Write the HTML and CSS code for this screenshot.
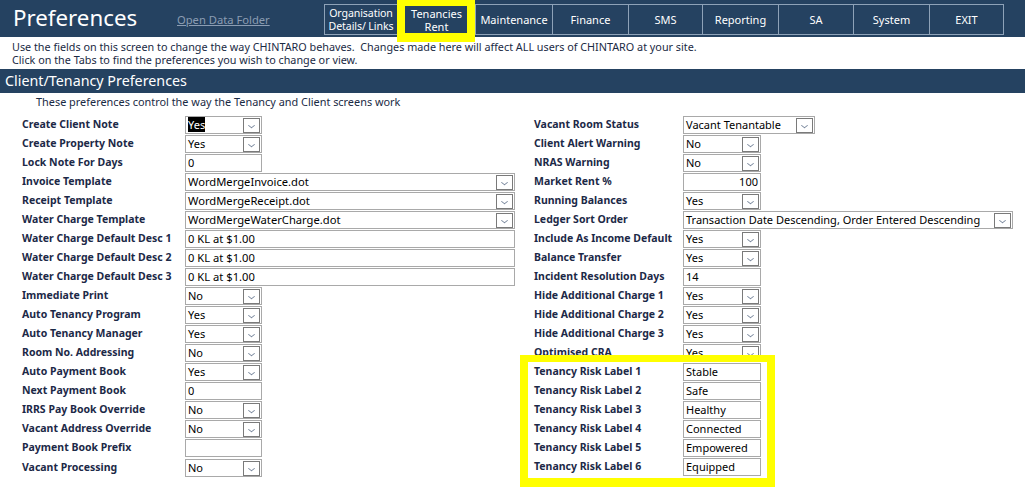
FILE: index.html
```html
<!DOCTYPE html>
<html>
<head>
<meta charset="utf-8">
<link rel="stylesheet" href="styles.css">
</head>
<body>
<div class="page">
  <header class="topbar">
    <h1 class="title">Preferences</h1>
    <a class="datalink">Open Data Folder</a>
    <nav class="tabs">
      <div class="tab t1">Organisation<br>Details/ Links</div>
      <div class="tab t2 active">Tenancies<br>Rent</div>
      <div class="tab t3">Maintenance</div>
      <div class="tab t4">Finance</div>
      <div class="tab t5">SMS</div>
      <div class="tab t6">Reporting</div>
      <div class="tab t7">SA</div>
      <div class="tab t8">System</div>
      <div class="tab t9">EXIT</div>
    </nav>
  </header>
  <div class="intro">
    <p>Use the fields on this screen to change the way CHINTARO behaves.&nbsp; Changes made here will affect ALL users of CHINTARO at your site.</p>
    <p>Click on the Tabs to find the preferences you wish to change or view.</p>
  </div>
  <div class="section">Client/Tenancy Preferences</div>
  <p class="sub">These preferences control the way the Tenancy and Client screens work</p>

  <div class="form">
    <div class="col left">
      <div class="row"><span class="lbl">Create Client Note</span><span class="fld combo w76"><span class="val"><span class="sel">Yes</span></span><span class="arr"></span></span></div>
      <div class="row"><span class="lbl">Create Property Note</span><span class="fld combo w76"><span class="val">Yes</span><span class="arr"></span></span></div>
      <div class="row"><span class="lbl">Lock Note For Days</span><span class="fld text w76"><span class="val">0</span></span></div>
      <div class="row"><span class="lbl">Invoice Template</span><span class="fld combo wide big"><span class="val">WordMergeInvoice.dot</span><span class="arr"></span></span></div>
      <div class="row"><span class="lbl">Receipt Template</span><span class="fld combo wide big"><span class="val">WordMergeReceipt.dot</span><span class="arr"></span></span></div>
      <div class="row"><span class="lbl">Water Charge Template</span><span class="fld combo wide big"><span class="val">WordMergeWaterCharge.dot</span><span class="arr"></span></span></div>
      <div class="row"><span class="lbl">Water Charge Default Desc 1</span><span class="fld text wide"><span class="val">0 KL at $1.00</span></span></div>
      <div class="row"><span class="lbl">Water Charge Default Desc 2</span><span class="fld text wide"><span class="val">0 KL at $1.00</span></span></div>
      <div class="row"><span class="lbl">Water Charge Default Desc 3</span><span class="fld text wide"><span class="val">0 KL at $1.00</span></span></div>
      <div class="row"><span class="lbl">Immediate Print</span><span class="fld combo w76"><span class="val">No</span><span class="arr"></span></span></div>
      <div class="row"><span class="lbl">Auto Tenancy Program</span><span class="fld combo w76"><span class="val">Yes</span><span class="arr"></span></span></div>
      <div class="row"><span class="lbl">Auto Tenancy Manager</span><span class="fld combo w76"><span class="val">Yes</span><span class="arr"></span></span></div>
      <div class="row"><span class="lbl">Room No. Addressing</span><span class="fld combo w76"><span class="val">No</span><span class="arr"></span></span></div>
      <div class="row"><span class="lbl">Auto Payment Book</span><span class="fld combo w76"><span class="val">Yes</span><span class="arr"></span></span></div>
      <div class="row"><span class="lbl">Next Payment Book</span><span class="fld text w76"><span class="val">0</span></span></div>
      <div class="row"><span class="lbl">IRRS Pay Book Override</span><span class="fld combo w76"><span class="val">No</span><span class="arr"></span></span></div>
      <div class="row"><span class="lbl">Vacant Address Override</span><span class="fld combo w76"><span class="val">No</span><span class="arr"></span></span></div>
      <div class="row"><span class="lbl">Payment Book Prefix</span><span class="fld text w76"><span class="val"></span></span></div>
      <div class="row last"><span class="lbl">Vacant Processing</span><span class="fld combo w76"><span class="val">No</span><span class="arr"></span></span></div>
    </div>
    <div class="col right">
      <div class="row"><span class="lbl">Vacant Room Status</span><span class="fld combo w131"><span class="val">Vacant Tenantable</span><span class="arr"></span></span></div>
      <div class="row"><span class="lbl">Client Alert Warning</span><span class="fld combo w77"><span class="val">No</span><span class="arr"></span></span></div>
      <div class="row"><span class="lbl">NRAS Warning</span><span class="fld combo w77"><span class="val">No</span><span class="arr"></span></span></div>
      <div class="row"><span class="lbl">Market Rent %</span><span class="fld text w77 num"><span class="val">100</span></span></div>
      <div class="row"><span class="lbl">Running Balances</span><span class="fld combo w77"><span class="val">Yes</span><span class="arr"></span></span></div>
      <div class="row"><span class="lbl">Ledger Sort Order</span><span class="fld combo w329"><span class="val">Transaction Date Descending, Order Entered Descending</span><span class="arr"></span></span></div>
      <div class="row"><span class="lbl">Include As Income Default</span><span class="fld combo w77"><span class="val">Yes</span><span class="arr"></span></span></div>
      <div class="row"><span class="lbl">Balance Transfer</span><span class="fld combo w77"><span class="val">Yes</span><span class="arr"></span></span></div>
      <div class="row"><span class="lbl">Incident Resolution Days</span><span class="fld text w77"><span class="val">14</span></span></div>
      <div class="row"><span class="lbl">Hide Additional Charge 1</span><span class="fld combo w77"><span class="val">Yes</span><span class="arr"></span></span></div>
      <div class="row"><span class="lbl">Hide Additional Charge 2</span><span class="fld combo w77"><span class="val">Yes</span><span class="arr"></span></span></div>
      <div class="row"><span class="lbl">Hide Additional Charge 3</span><span class="fld combo w77"><span class="val">Yes</span><span class="arr"></span></span></div>
      <div class="row"><span class="lbl">Optimised CRA</span><span class="fld combo w77"><span class="val">Yes</span><span class="arr"></span></span></div>
      <div class="risk">
        <div class="row"><span class="lbl">Tenancy Risk Label 1</span><span class="fld text w77"><span class="val">Stable</span></span></div>
        <div class="row"><span class="lbl">Tenancy Risk Label 2</span><span class="fld text w77"><span class="val">Safe</span></span></div>
        <div class="row"><span class="lbl">Tenancy Risk Label 3</span><span class="fld text w77"><span class="val">Healthy</span></span></div>
        <div class="row"><span class="lbl">Tenancy Risk Label 4</span><span class="fld text w77"><span class="val">Connected</span></span></div>
        <div class="row"><span class="lbl">Tenancy Risk Label 5</span><span class="fld text w77"><span class="val">Empowered</span></span></div>
        <div class="row"><span class="lbl">Tenancy Risk Label 6</span><span class="fld text w77"><span class="val">Equipped</span></span></div>
        <div class="hl"></div>
      </div>
    </div>
  </div>
</div>
</body>
</html>
```
FILE: styles.css
```css
*, *::before, *::after { box-sizing: border-box; }
html, body { margin: 0; padding: 0; background: #fff; }
body {
  font-family: "Noto Sans", "Open Sans", "DejaVu Sans", sans-serif;
  width: 1025px;
  height: 489px;
  overflow: hidden;
}
.page { width: 1025px; }

.topbar {
  background: #254261;
  height: 37px;
  display: flex;
  align-items: flex-start;
}
.title {
  margin: 0;
  padding: 2px 0 0 13px;
  font-weight: 400;
  font-size: 22.3px;
  line-height: 32px;
  color: #fff;
  width: 177px;
}
.datalink {
  color: #8c9db3;
  text-decoration: underline;
  font-size: 11.2px;
  line-height: 14px;
  margin-top: 13px;
  width: 147px;
}
.tabs {
  display: flex;
  margin-top: 4px;
  border: 1px solid #8ea2b8;
  height: 31px;
}
.tab {
  height: 29px;
  border-left: 1px solid #8ea2b8;
  color: #fff;
  font-size: 11px;
  display: flex;
  align-items: center;
  justify-content: center;
  text-align: center;
  line-height: 13px;
  white-space: nowrap;
  flex: none;
}
.t1 {
  border-left: none;
  width: 72px;
  font-size: 10.6px;
  letter-spacing: -0.1px;
}
.t2 { width: 78px; }
.t3 { width: 77px; }
.t4 { width: 76px; }
.t5 { width: 74px; }
.t6 { width: 76px; }
.t7 { width: 75px; }
.t8 { width: 76px; }
.t9 { width: 74px; }
.tab.active {
  position: relative;
  z-index: 2;
}
.tab.active::after {
  content: "";
  position: absolute;
  left: -1px;
  top: -5px;
  width: 78px;
  height: 42px;
  border-style: solid;
  border-color: #ffff00;
  border-width: 6px 8px 9px 8px;
}

.intro { padding: 3px 0 0 12px; height: 32px; }
.intro p {
  margin: 0;
  font-size: 10.8px;
  line-height: 13px;
  color: #1a2a44;
}
.section {
  background: #254261;
  color: #fff;
  font-size: 14.3px;
  height: 24px;
  line-height: 24px;
  padding-left: 5px;
}
.sub {
  margin: 0;
  padding: 2px 0 0 36px;
  font-size: 10.9px;
  line-height: 13px;
  color: #1a2a44;
  height: 23px;
}

.form { display: flex; }
.col { display: flex; flex-direction: column; }
.col.left { padding-left: 22px; width: 534px; }
.row {
  display: flex;
  align-items: flex-start;
  height: 19px;
}
.lbl {
  font-weight: 700;
  font-size: 10.5px;
  line-height: 14px;
  color: #1c2947;
  padding-top: 1px;
}
.left .lbl { width: 163px; }
.right .lbl { width: 149px; }
.left .row.last { margin-top: 1px; }

.fld {
  display: flex;
  height: 18px;
  border: 1px solid #a9a9a9;
  background: #fff;
  align-items: stretch;
}
.fld .val {
  flex: 1;
  font-size: 11px;
  line-height: 16px;
  padding-left: 2px;
  color: #000;
  white-space: nowrap;
  overflow: hidden;
}
.fld.big .val { font-size: 11.6px; }
.fld.wide .val { font-size: 11.2px; }
.fld.num .val { text-align: right; padding-right: 2px; }
.sel { background: #000; color: #fff; }
.w76 { width: 77px; }
.w77 { width: 78px; }
.w131 { width: 132px; }
.w329 { width: 330px; }
.wide { width: 330px; }

.arr {
  width: 17px;
  margin: 1px 1px 0 0;
  border: 1px solid #7a7a7a;
  position: relative;
}
.arr::after {
  content: "";
  position: absolute;
  left: 4.5px;
  top: 3.5px;
  width: 5px;
  height: 5px;
  border-right: 1.5px solid #76859a;
  border-bottom: 1.5px solid #76859a;
  transform: scaleY(0.8) rotate(45deg);
}

.risk { position: relative; }
.hl {
  position: absolute;
  left: -14px;
  top: -8px;
  width: 255px;
  height: 132px;
  border-style: solid;
  border-color: #ffff00;
  border-width: 7px 8px 9px 8px;
  pointer-events: none;
}
```
